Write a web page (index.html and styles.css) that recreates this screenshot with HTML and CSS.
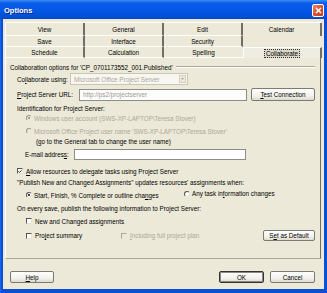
FILE: index.html
```html
<!DOCTYPE html>
<html lang="en">
<head>
    <meta charset="UTF-8">
    <title>Options</title>
    <link rel="stylesheet" href="styles.css">
</head>
<body>
<div class="window">
    <div class="titlebar">
        <span class="title">Options</span>
        <span class="close"><svg width="7" height="7" viewBox="0 0 7 7"><path d="M1 1L6 6M6 1L1 6" stroke="#fff" stroke-width="1.5"/></svg></span>
    </div>
    <div class="frame">
        <div class="dialog">
            <div class="tabs">
                <div class="tab">View</div>
                <div class="tab">General</div>
                <div class="tab">Edit</div>
                <div class="tab cal">Calendar</div>
                <div class="tab">Save</div>
                <div class="tab">Interface</div>
                <div class="tab">Security</div>
                <div class="tab blank"></div>
                <div class="tab front">Schedule</div>
                <div class="tab front">Calculation</div>
                <div class="tab front nosep">Spelling</div>
                <div class="tab selected"><span class="focus">Collaborate</span></div>
            </div>
            <div class="panel">
                <div class="row r1 group">
                    <span>Collaboration options for 'CP_0701173552_001.Published'</span>
                    <span class="etch"></span>
                </div>
                <div class="row r2 in7">
                    <span class="label w53">Co<u>l</u>laborate using:</span>
                    <span class="select">
                        <span class="value">Microsoft Office Project Server</span>
                        <span class="arrow"><svg width="3" height="2" viewBox="0 0 3 2"><path d="M0 0H3L1.5 2Z" fill="#aca899"/></svg></span>
                    </span>
                </div>
                <div class="row r3 in7">
                    <span class="label w62"><u>P</u>roject Server URL:</span>
                    <span class="input url">http://ps2/projectserver</span>
                    <button class="btn test"><u>T</u>est Connection</button>
                </div>
                <div class="row r4 in7">Identification for Project Server:</div>
                <div class="row r5 in16 disabled">
                    <span class="radio on"></span>
                    <span>Windows user account (SWS-XP-LAPTOP\Teresa Stover)</span>
                </div>
                <div class="row r6 in16 disabled">
                    <span class="radio"></span>
                    <span>Microsoft Office Project user name 'SWS-XP-LAPTOP\Teresa Stover'</span>
                </div>
                <div class="row r7 in26">(go to the General tab to change the user name)</div>
                <div class="row r8 in15">
                    <span class="label w49">E-mail addres<u>s</u>:</span>
                    <span class="input email"></span>
                </div>
                <div class="row r9 in7">
                    <span class="check on"><svg width="5" height="5" viewBox="0 0 5 5"><path d="M0.6 2.4L1.9 3.7L4.4 1" stroke="#000" stroke-width="1.1" fill="none"/></svg></span>
                    <span><u>A</u>llow resources to delegate tasks using Project Server</span>
                </div>
                <div class="row r10 in7">"Publish New and Changed Assignments" updates resources' assignments when:</div>
                <div class="row r11 in16">
                    <span class="option w158">
                        <span class="radio on"></span>
                        <span>Start, Finish, % Complete or outline cha<u>n</u>ges</span>
                    </span>
                    <span class="option up">
                        <span class="radio"></span>
                        <span>Any task in<u>f</u>ormation changes</span>
                    </span>
                </div>
                <div class="row r12 in7">On every save, publish the following information to Project Server:</div>
                <div class="row r13 in16">
                    <span class="check"></span>
                    <span>New and Changed assignments</span>
                </div>
                <div class="row r14 in16">
                    <span class="option w95">
                        <span class="check"></span>
                        <span>Pro<u>j</u>ect summary</span>
                    </span>
                    <span class="option disabled">
                        <span class="check off"></span>
                        <span><u>I</u>ncluding full project plan</span>
                    </span>
                    <button class="btn setdef">S<u>e</u>t as Default</button>
                </div>
            </div>
            <div class="footer">
                <button class="btn help"><u>H</u>elp</button>
                <button class="btn ok">OK</button>
                <button class="btn cancel">Cancel</button>
            </div>
        </div>
    </div>
</div>
</body>
</html>
```

FILE: styles.css
```css
* {
    margin: 0;
    padding: 0;
    box-sizing: border-box;
}
body {
    width: 327px;
    height: 293px;
    overflow: hidden;
    background: #fff;
    font-family: "Liberation Sans", Arial, sans-serif;
    font-size: 6.3px;
    color: #000;
}
u {
    text-decoration: underline;
    text-underline-offset: 1px;
}

/* window frame */
.window {
    width: 327px;
    height: 293px;
    display: flex;
    flex-direction: column;
}
.titlebar {
    height: 19px;
    display: flex;
    align-items: center;
    justify-content: space-between;
    padding: 0 3px 0 4px;
    background: linear-gradient(#3d8cf7 0, #0b5ee9 3px, #0457e6 10px, #0050d8 17px, #0046c4 19px);
}
.title {
    color: #fff;
    font-weight: bold;
    font-size: 7.5px;
    text-shadow: 1px 1px 0 #0a2a80;
    margin-top: 1px;
}
.close {
    width: 12px;
    height: 13px;
    border: 1px solid #fff;
    border-radius: 2px;
    background: linear-gradient(135deg, #e98c6c, #d8532d 50%, #c2401f);
    display: flex;
    align-items: center;
    justify-content: center;
    margin-top: 1px;
}
.frame {
    flex: 1;
    background: #0a4fd6;
    padding: 0 3px 4px 3px;
    border-left: 1px solid #1466ee;
}
.dialog {
    height: 270px;
    margin-left: -1px;
    background: #ece9d8;
    padding: 3px 3px 0 2px;
    display: flex;
    flex-direction: column;
}

/* tab strip */
.tabs {
    display: grid;
    grid-template-columns: repeat(4, 79px);
    grid-template-rows: 13px 11px 11px;
    border-left: 1px solid #fff;
    border-top: 1px solid #fff;
}
.tab {
    display: flex;
    align-items: center;
    justify-content: center;
    border-right: 2px solid #716f64;
    border-bottom: 1px solid #fff;
}
.tab.cal {
    border-bottom: none;
}
.tab.blank {
    border-right: none;
    border-bottom: none;
}
.tab.nosep {
    border-right: none;
}
.tab.selected {
    border-bottom: none;
    border-left: 1px solid #fff;
    border-top: 1px solid #fff;
    background: #efede2;
}
.focus {
    border: 1px dotted #333;
    background: #dcd9cb;
    padding: 0 1px;
    line-height: 7px;
}

/* tab page */
.panel {
    height: 201px;
    border-left: 1px solid #fff;
    border-right: 1px solid #716f64;
    border-bottom: 1px solid #aca899;
    padding: 0 5px 0 4px;
    display: flex;
    flex-direction: column;
}
.row {
    display: flex;
    align-items: center;
    height: 10px;
    white-space: nowrap;
}
.r1 { margin-top: 4px; }
.r2 { margin-top: 1px; height: 12px; }
.r3 { margin-top: 3px; height: 13px; }
.r4 { margin-top: 2px; }
.r6 { margin-top: 3px; }
.r8 { margin-top: 3px; height: 11px; }
.r9 { margin-top: 6px; }
.r10 { margin-top: 1px; }
.r11 { margin-top: 3px; }
.r12 { margin-top: 3px; }
.r13 { margin-top: 3px; }
.r14 { margin-top: 4px; height: 11px; }

.in7 { padding-left: 7px; }
.in15 { padding-left: 15px; }
.in16 { padding-left: 16px; }
.in26 { padding-left: 26px; }

.group .etch {
    flex: 1;
    height: 2px;
    margin-left: 3px;
    border-top: 1px solid #aca899;
    border-bottom: 1px solid #fff;
}
.label { flex: none; }
.w49 { width: 49px; }
.w53 { width: 53px; }
.w62 { width: 62px; }
.w95 { width: 95px; }
.w158 { width: 158px; }
.disabled { color: #aca899; }
.option {
    display: flex;
    align-items: center;
}
.option.up { margin-top: -3px; }

.select {
    width: 118px;
    height: 12px;
    border: 1px solid #c9c6b6;
    background: #f7f6f0;
    display: flex;
    align-items: center;
    padding: 0 1px 0 3px;
    color: #aca899;
}
.select .value { flex: 1; }
.select .arrow {
    width: 7px;
    height: 8px;
    border: 1px solid #d3d0c2;
    background: #ece9d8;
    display: flex;
    align-items: center;
    justify-content: center;
}
.input {
    height: 12px;
    border: 1px solid #8c8c88;
    background: #fff;
    display: flex;
    align-items: center;
    padding-left: 3px;
}
.input.url {
    width: 168px;
    color: #9a9a96;
    background: #fcfcfa;
}
.input.email {
    width: 172px;
    height: 11px;
}

.radio {
    width: 6px;
    height: 6px;
    border-radius: 50%;
    border: 1px solid;
    border-color: #555 #e6e4da #e6e4da #555;
    background: #fff;
    margin-right: 2px;
    display: flex;
    align-items: center;
    justify-content: center;
}
.radio.on::after {
    content: "";
    width: 2px;
    height: 2px;
    border-radius: 50%;
    background: #000;
}
.disabled .radio {
    border-color: #9d9b90 #ece9d8 #ece9d8 #9d9b90;
    background: #ece9d8;
}
.disabled .radio.on::after {
    background: #8d8b80;
}
.check {
    width: 6px;
    height: 6px;
    border: 1px solid;
    border-color: #555 #e6e4da #e6e4da #555;
    background: #fff;
    margin-right: 3px;
    display: flex;
    align-items: center;
    justify-content: center;
}
.check.off {
    border-color: #a9a79c #ece9d8 #ece9d8 #a9a79c;
    background: #ece9d8;
}

/* buttons */
.btn {
    height: 12px;
    font-family: inherit;
    font-size: 6.3px;
    color: #000;
    border: 1px solid #7b7a74;
    border-radius: 2px;
    background: linear-gradient(#fefefd, #f3f2ec 60%, #dedbce);
}
.test {
    width: 64px;
    margin-left: 4px;
    height: 13px;
}
.setdef {
    width: 52px;
    height: 11px;
    margin-left: auto;
}

.footer {
    display: flex;
    margin-top: 12px;
    padding: 0 6px 0 5px;
}
.help { width: 44px; }
.ok {
    width: 45px;
    margin-left: auto;
    border-color: #333;
    box-shadow: inset 0 0 0 1px #8a8a84;
}
.cancel {
    width: 45px;
    margin-left: 6px;
}
```
